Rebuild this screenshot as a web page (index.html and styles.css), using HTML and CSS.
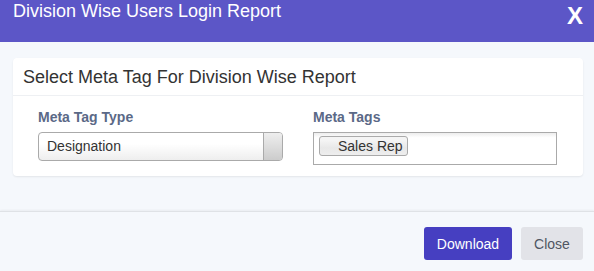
FILE: index.html
```html
<!DOCTYPE html>
<html>
<head>
  <title>Division Wise Users Login Report</title>
  <link rel="stylesheet" href="styles.css">
</head>
<body>
  <div class="modal">
    <div class="modal-header">
      <h3>Division Wise Users Login Report</h3>
      <span class="close-x">X</span>
    </div>

    <div class="modal-body">
      <div class="panel">
        <div class="panel-heading">Select Meta Tag For Division Wise Report</div>
        <div class="panel-body">
          <div class="field">
            <label>Meta Tag Type</label>
            <div class="select">
              <span class="select-text">Designation</span>
              <span class="select-arrow"></span>
            </div>
          </div>
          <div class="field">
            <label>Meta Tags</label>
            <div class="multi">
              <span class="tag">Sales Rep</span>
            </div>
          </div>
        </div>
      </div>
    </div>

    <div class="modal-footer">
      <button class="btn btn-primary">Download</button>
      <button class="btn btn-light">Close</button>
    </div>
  </div>
</body>
</html>
```

FILE: styles.css
```css
body {
  margin: 0;
  font-family: "Liberation Sans", Arial, sans-serif;
  background-color: #f5f8fc;
}
.modal {
  width: 594px;
  height: 271px;
  background-color: #f5f8fc;
}
.modal-header {
  height: 42px;
  background-color: #5c56c7;
  color: white;
  display: flex;
  justify-content: space-between;
  padding: 0 11px 0 13px;
  box-sizing: border-box;
}
.modal-header h3 {
  margin: 0;
  font-size: 18px;
  font-weight: normal;
  line-height: 22px;
}
.close-x {
  font-size: 24px;
  font-weight: bold;
  line-height: 31px;
}
.modal-body {
  padding: 16px 11px 35px 13px;
}
.panel {
  background: white;
  border-radius: 4px;
  box-shadow: 0 1px 2px rgba(0,0,0,0.08);
  height: 118px;
}
.panel-heading {
  height: 37px;
  line-height: 38px;
  padding-left: 10px;
  font-size: 18px;
  color: #333;
  border-bottom: 1px solid #eef0f3;
}
.panel-body {
  display: grid;
  grid-template-columns: 245px 244px;
  column-gap: 30px;
  padding: 13px 26px 0 25px;
}
.field label {
  display: block;
  font-size: 14px;
  font-weight: bold;
  color: #5b6987;
  height: 23px;
  line-height: 16px;
}
.select {
  display: flex;
  height: 29px;
  box-sizing: border-box;
  border: 1px solid #aaa;
  border-radius: 4px;
  background: linear-gradient(#fff 40%, #eee);
  overflow: hidden;
}
.select-text {
  flex: 1;
  padding-left: 8px;
  font-size: 14px;
  line-height: 27px;
  color: #333;
}
.select-arrow {
  width: 18px;
  border-left: 1px solid #aaa;
  background: linear-gradient(#eee, #ccc);
}
.multi {
  height: 33px;
  box-sizing: border-box;
  border: 1px solid #aaa;
  background: linear-gradient(#eee 1%, #fff 15%);
  padding: 3px 5px;
}
.tag {
  display: inline-block;
  height: 20px;
  box-sizing: border-box;
  padding: 0 4px 0 18px;
  border: 1px solid #aaa;
  border-radius: 3px;
  background: linear-gradient(#f4f4f4 20%, #e8e8e8 60%, #eee);
  font-size: 14px;
  line-height: 18px;
  color: #333;
}
.modal-footer {
  border-top: 1px solid #dfe2e6;
  box-shadow: 0 -1px 2px rgba(0,0,0,0.05);
  display: flex;
  justify-content: flex-end;
  gap: 9px;
  padding: 15px 11px 0 0;
}
.btn {
  height: 33px;
  border: none;
  border-radius: 3px;
  font-family: "Liberation Sans", Arial, sans-serif;
  font-size: 14px;
}
.btn-primary {
  width: 88px;
  background-color: #463fc1;
  color: white;
}
.btn-light {
  width: 62px;
  background-color: #e2e3e8;
  color: #4f5662;
}
```
